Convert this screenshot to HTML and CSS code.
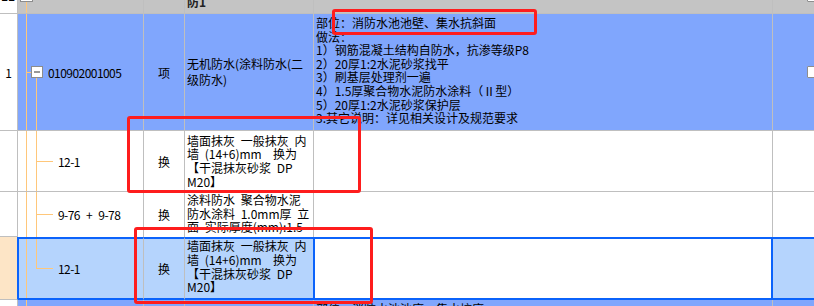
FILE: index.html
```html
<!DOCTYPE html>
<html lang="zh-CN">
<head>
<meta charset="utf-8">
<title>清单</title>
<link rel="stylesheet" href="styles.css">
</head>
<body>
<div class="grid">
  <div class="row r0">
    <div class="c c0 top-left"><span class="frag">11</span></div>
    <div class="c c1 gray tree-a top"><span class="box boxcut"></span></div>
    <div class="c c2 gray"></div>
    <div class="c c3 gray top"><span class="prev">防1</span></div>
    <div class="c c4 gray"></div>
    <div class="c c5 gray top"><span class="chk chkcut"></span></div>
  </div>

  <div class="row r1">
    <div class="c c0 num">1</div>
    <div class="c c1 blue tree-parent">
      <span class="tick"></span>
      <svg class="minus" width="12" height="12" viewBox="0 0 12 12"><rect x="0.5" y="0.5" width="11" height="11" fill="#fff" stroke="#8c8c8c"/><line x1="3" y1="6" x2="9" y2="6" stroke="#333" stroke-width="1"/></svg>
      <span class="code">010902001005</span>
    </div>
    <div class="c c2 blue mid">项</div>
    <div class="c c3 blue"><span class="name">无机防水(涂料防水(二<br>级防水)</span></div>
    <div class="c c4 blue top desc">部位：消防水池池壁、集水抗斜面<br>做法：<br>1）钢筋混凝土结构自防水，抗渗等级P8<br>2）20厚1:2水泥砂浆找平<br>3）刷基层处理剂一遍<br>4）1.5厚聚合物水泥防水涂料（Ⅱ型）<br>5）20厚1:2水泥砂浆保护层<br>3.其它说明：详见相关设计及规范要求</div>
    <div class="c c5 blue"><span class="chk"></span></div>
  </div>

  <div class="row r2">
    <div class="c c0"></div>
    <div class="c c1 tree-child"><span class="elbow"></span><span class="code">12-1</span></div>
    <div class="c c2 mid">换</div>
    <div class="c c3"><span class="txt">墙面抹灰 一般抹灰 内<br>墙 (14+6)mm  换为<br>【干混抹灰砂浆 DP<br>M20】</span></div>
    <div class="c c4"></div>
    <div class="c c5"></div>
  </div>

  <div class="row r3">
    <div class="c c0 nb"></div>
    <div class="c c1 tree-child nb"><span class="elbow"></span><span class="code">9-76 + 9-78</span></div>
    <div class="c c2 mid nb">换</div>
    <div class="c c3 top nb"><span class="txt t3">涂料防水 聚合物水泥<br>防水涂料 1.0mm厚 立<br>面 实际厚度(mm):1.5</span></div>
    <div class="c c4 nb"></div>
    <div class="c c5 nb"></div>
  </div>

  <div class="row r4">
    <div class="c c0 peach"></div>
    <div class="c c1 sel sel-first tree-last"><span class="elbow"></span><span class="code">12-1</span></div>
    <div class="c c2 sel mid">换</div>
    <div class="c c3 sel sel-edge"><span class="txt t4">墙面抹灰 一般抹灰 内<br>墙 (14+6)mm  换为<br>【干混抹灰砂浆 DP<br>M20】</span></div>
    <div class="c c4 sel focus"></div>
    <div class="c c5 sel"></div>
  </div>

  <div class="row r5">
    <div class="c c0"></div>
    <div class="c c1 blue tree-a"></div>
    <div class="c c2 blue"></div>
    <div class="c c3 blue"></div>
    <div class="c c4 blue top desc">部位：消防水池池底、集水坑底<br>做法：</div>
    <div class="c c5 blue"></div>
  </div>
</div>

<div class="mark m1"></div>
<div class="mark m2"></div>
<div class="mark m3"></div>
</body>
</html>
```

FILE: styles.css
```css
:root {
  --line: #bfbfbf;
  --orange: #ffc77a;
  --blue: #80a6fd;
  --selblue: #0b63fb;
  --light: #b5d4fd;
  --peach: #fde5c6;
}

* { box-sizing: border-box; }

html, body {
  margin: 0;
  padding: 0;
}

body {
  width: 814px;
  height: 306px;
  overflow: hidden;
  position: relative;
  background: #fff;
  font-family: "Noto Sans CJK SC", "Noto Sans", sans-serif;
  font-size: 12px;
  color: #000;
}

.grid {
  display: flex;
  flex-direction: column;
}

.row {
  display: grid;
  grid-template-columns: 18px 126px 41px 129px 459px 41px;
}

.r0 { height: 14px; }
.r1 { height: 117px; }
.r2 { height: 61px; }
.r3 { height: 45px; }
.r4 { height: 63px; }
.r5 { height: 20px; }

.c {
  display: flex;
  align-items: center;
  overflow: hidden;
  white-space: pre;
  border-right: 1px solid var(--line);
  border-bottom: 1px solid var(--line);
  background-color: #fff;
}

.c5 { border-right: none; }
.nb { border-bottom: none; }
.c0.nb { border-bottom: 1px solid var(--line); }

.top { align-items: flex-start; }
.mid { justify-content: center; }

.gray { background-color: #c4c4c4; }
.blue { background-color: var(--blue); }
.peach { background-color: var(--peach); border-right-color: var(--selblue); }

/* row number column */
.num { justify-content: center; }
.top-left { align-items: flex-start; }
.frag {
  font-weight: bold;
  line-height: 12px;
  margin-top: -10px;
  margin-left: 1px;
}
.prev {
  font-weight: bold;
  color: #222;
  line-height: 14px;
  margin-top: -5px;
  margin-left: 2px;
}

/* tree lines */
.tree-a {
  background-image: linear-gradient(var(--orange), var(--orange));
  background-position: 8px 0;
  background-size: 1px 100%;
  background-repeat: no-repeat;
}
.tree-parent {
  background-image: linear-gradient(var(--orange), var(--orange)), linear-gradient(var(--orange), var(--orange));
  background-position: 8px 0, 18px 64px;
  background-size: 1px 100%, 1px 100%;
  background-repeat: no-repeat;
}
.tree-child {
  background-image: linear-gradient(var(--orange), var(--orange)), linear-gradient(var(--orange), var(--orange));
  background-position: 8px 0, 18px 0;
  background-size: 1px 100%, 1px 100%;
  background-repeat: no-repeat;
}
.tree-last {
  background-image: linear-gradient(var(--orange), var(--orange)), linear-gradient(var(--orange), var(--orange));
  background-position: 8px 0, 18px 0;
  background-size: 1px 100%, 1px 50%;
  background-repeat: no-repeat;
}

.tick {
  width: 4px;
  height: 1px;
  margin-left: 9px;
  background: var(--orange);
}
.minus { display: block; flex: none; }
.code {
  margin-left: 5px;
  letter-spacing: -0.55px;
  word-spacing: 4px;
}

.elbow {
  width: 17px;
  height: 1px;
  margin-left: 18px;
  background: var(--orange);
  flex: none;
}

.box {
  display: block;
  width: 13px;
  height: 13px;
  background: #fff;
  border: 1px solid #8c8c8c;
  margin-left: 2px;
}
.boxcut { margin-top: -11px; }

.chk {
  display: block;
  width: 12px;
  height: 12px;
  background: #fff;
  border: 1px solid #8e8e8e;
  border-radius: 1px;
  margin-left: 34px;
  flex: none;
}
.chkcut { margin-top: -10px; }

/* text columns */
.name {
  line-height: 16.5px;
  padding-left: 2px;
}
.txt {
  line-height: 13.7px;
  padding-left: 2px;
  word-spacing: 3px;
}
.t3 { padding-top: 1px; }
.t4 { margin-bottom: 4px; }

.desc {
  line-height: 13.6px;
  padding: 2px 0 0 2px;
}

/* selected row */
.sel {
  background-color: var(--light);
  border-top: 2px solid var(--selblue);
  border-bottom: 2px solid var(--selblue);
}
.sel-first { box-shadow: inset 1px 0 0 var(--selblue); }
.sel-edge { border-right-color: var(--selblue); }
.focus {
  background-color: #fff;
  border-right-color: var(--selblue);
  box-shadow: inset 1px 0 0 var(--selblue), inset -1px 0 0 var(--selblue);
}

/* red annotation boxes */
.mark {
  position: absolute;
  border: 3px solid #fe1d1d;
  border-radius: 3px;
}
.m1 { left: 332px; top: 9px; width: 205px; height: 26px; }
.m2 { left: 127px; top: 116px; width: 234px; height: 77px; }
.m3 { left: 134px; top: 227px; width: 239px; height: 77px; }
```
